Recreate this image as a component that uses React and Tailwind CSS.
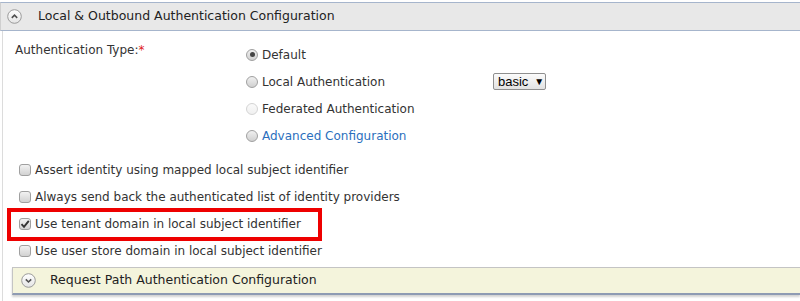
import React from 'react'

const CircleChevron = ({ up }) => (
  <svg width="15" height="15" viewBox="0 0 15 15">
    <defs>
      <linearGradient id={up ? 'gu' : 'gd'} x1="0" y1="0" x2="0" y2="1">
        <stop offset="0" stopColor="#ffffff" />
        <stop offset="1" stopColor="#e4e4e4" />
      </linearGradient>
    </defs>
    <circle cx="7.5" cy="7.5" r="6.8" fill={`url(#${up ? 'gu' : 'gd'})`} stroke="#9a9a9a" strokeWidth="1" />
    {up ? (
      <path d="M4.8 8.8 L7.5 6.2 L10.2 8.8" fill="none" stroke="#505050" strokeWidth="1.6" />
    ) : (
      <path d="M4.8 6.4 L7.5 9 L10.2 6.4" fill="none" stroke="#505050" strokeWidth="1.6" />
    )}
  </svg>
)

const Radio = ({ checked, disabled }) => (
  <span
    className={`w-[12px] h-[12px] rounded-full border flex items-center justify-center shrink-0 ${
      disabled
        ? 'border-[#d4d4d4] bg-gradient-to-b from-[#fafafa] to-[#f0f0f0]'
        : 'border-[#a0a0a0] bg-gradient-to-b from-[#f0f0f0] to-[#d0d0d0]'
    }`}
  >
    {checked && <span className="w-[5px] h-[5px] rounded-full bg-[#444]" />}
  </span>
)

const Checkbox = ({ checked }) => (
  <span className="w-[12px] h-[12px] rounded-[3px] border border-[#a0a0a0] bg-gradient-to-b from-[#f2f2f2] to-[#d2d2d2] flex items-center justify-center shrink-0">
    {checked && (
      <svg width="10" height="10" viewBox="0 0 10 10">
        <path d="M1.5 5.2 L4 7.8 L8.8 1.8" fill="none" stroke="#333" strokeWidth="1.9" />
      </svg>
    )}
  </span>
)

const radios = [
  { label: 'Default', checked: true },
  { label: 'Local Authentication', select: true },
  { label: 'Federated Authentication', disabled: true },
  { label: 'Advanced Configuration', link: true },
]

const checks = [
  { label: 'Assert identity using mapped local subject identifier' },
  { label: 'Always send back the authenticated list of identity providers' },
  { label: 'Use tenant domain in local subject identifier', checked: true },
  { label: 'Use user store domain in local subject identifier' },
]

export default function App() {
  return (
    <div className="relative w-[800px] h-[301px] overflow-hidden bg-white font-['DejaVu_Sans',sans-serif] text-[12px] text-[#333]">
      <div className="pt-[2px]">
        <div className="h-[29px] flex items-center bg-[#e8e8e8] border-y border-[#a6b5cc] border-l border-l-[#cfcfcf] pl-[6px]">
          <CircleChevron up />
          <span className="ml-[16px] text-[12.5px] text-[#222]">
            Local &amp; Outbound Authentication Configuration
          </span>
        </div>
      </div>

      <div className="ml-[2px] border-l border-[#dcdcdc] pb-[10px]">
        <div className="flex pt-[10px] pl-[12px]">
          <div className="w-[231px] pt-[2px] leading-[15px]">
            Authentication Type:<span className="text-[#e02020]">*</span>
          </div>
          <div className="flex flex-col">
            {radios.map((r) => (
              <div key={r.label} className="h-[27px] flex items-center">
                <Radio checked={r.checked} disabled={r.disabled} />
                <span
                  className={`ml-[4px] w-[231px] ${r.link ? 'text-[#2b6fbd]' : ''}`}
                >
                  {r.label}
                </span>
                {r.select && (
                  <div className="h-[17px] w-[53px] flex items-center pl-[4px] gap-[6px] border border-[#8f8f8f] rounded-[2px] bg-gradient-to-b from-[#fbfbfb] to-[#e2e2e2] font-['Liberation_Sans',sans-serif] text-[13px] text-black">
                    <span>basic</span>
                    <span className="text-[10px]">▼</span>
                  </div>
                )}
              </div>
            ))}
          </div>
        </div>

        <div className="flex flex-col pt-[7px] pl-[16px]">
          {checks.map((c) => (
            <div key={c.label} className="h-[27px] flex items-center">
              <Checkbox checked={c.checked} />
              <span className="ml-[4px]">{c.label}</span>
            </div>
          ))}
        </div>

        <div className="ml-[9px] mt-[3px] h-[28px] flex items-center bg-[#f4f4dc] border-t border-l border-[#c4c4c4] border-b-2 border-b-[#8e9bb3] shadow-[0_2px_2px_rgba(0,0,0,0.18)] pl-[8px]">
          <CircleChevron />
          <span className="ml-[14px] text-[12.5px] text-[#222]">
            Request Path Authentication Configuration
          </span>
        </div>
      </div>

      <div className="absolute left-[7px] top-[208px] w-[315px] h-[33px] border-[4px] border-[#ee0000]" />
    </div>
  )
}
